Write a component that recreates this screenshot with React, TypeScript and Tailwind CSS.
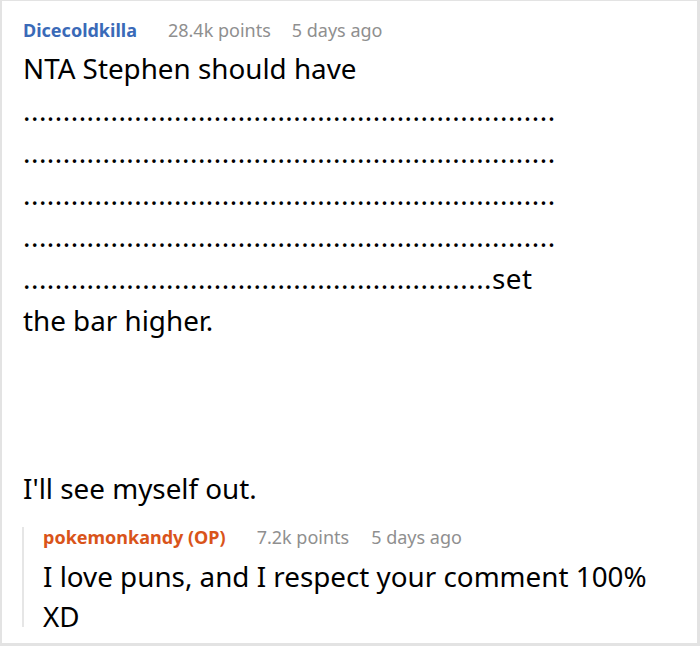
const dots = (n: number) => ".".repeat(n);

export default function App() {
  return (
    <div
      className="w-[700px] h-[646px] bg-white border-t border-l-2 border-r-[3px] border-b-[3px] border-[#e3e3e3] overflow-hidden"
      style={{ fontFamily: '"Noto Sans", sans-serif' }}
    >
      <div className="pl-[21px] pt-[16px]">
        <div className="flex items-baseline text-[18px] leading-[26px]">
          <span className="font-bold text-[#3a6ab8]">Dicecoldkilla</span>
          <span className="ml-[31px] text-[#8f8f8f]">28.4k points</span>
          <span className="ml-[21px] text-[#8f8f8f]">5 days ago</span>
        </div>
        <div className="text-[27.8px] leading-[42px] text-black mt-[4px]">
          <div>NTA Stephen should have</div>
          <div className="tracking-[0.5px]">{dots(67)}</div>
          <div className="tracking-[0.5px]">{dots(67)}</div>
          <div className="tracking-[0.5px]">{dots(67)}</div>
          <div className="tracking-[0.5px]">{dots(67)}</div>
          <div>
            <span className="tracking-[0.5px]">{dots(59)}</span>
            <span className="tracking-[0.5px]">set</span>
          </div>
          <div>the bar higher.</div>
          <div className="h-[126px]" />
          <div>I'll see myself out.</div>
        </div>
        <div className="mt-[18px] -ml-px border-l-2 border-[#e6e6e6] pl-[19px]">
          <div className="flex items-baseline text-[18px] leading-[20px]">
            <span className="font-bold text-[#d9541a]">pokemonkandy (OP)</span>
            <span className="ml-[31px] text-[#8f8f8f]">7.2k points</span>
            <span className="ml-[22px] text-[#8f8f8f]">5 days ago</span>
          </div>
          <div className="text-[27.8px] leading-[40px] text-black mt-[9px]">
            <div>I love puns, and I respect your comment 100%</div>
            <div className="h-[31px]">XD</div>
          </div>
        </div>
      </div>
    </div>
  );
}
